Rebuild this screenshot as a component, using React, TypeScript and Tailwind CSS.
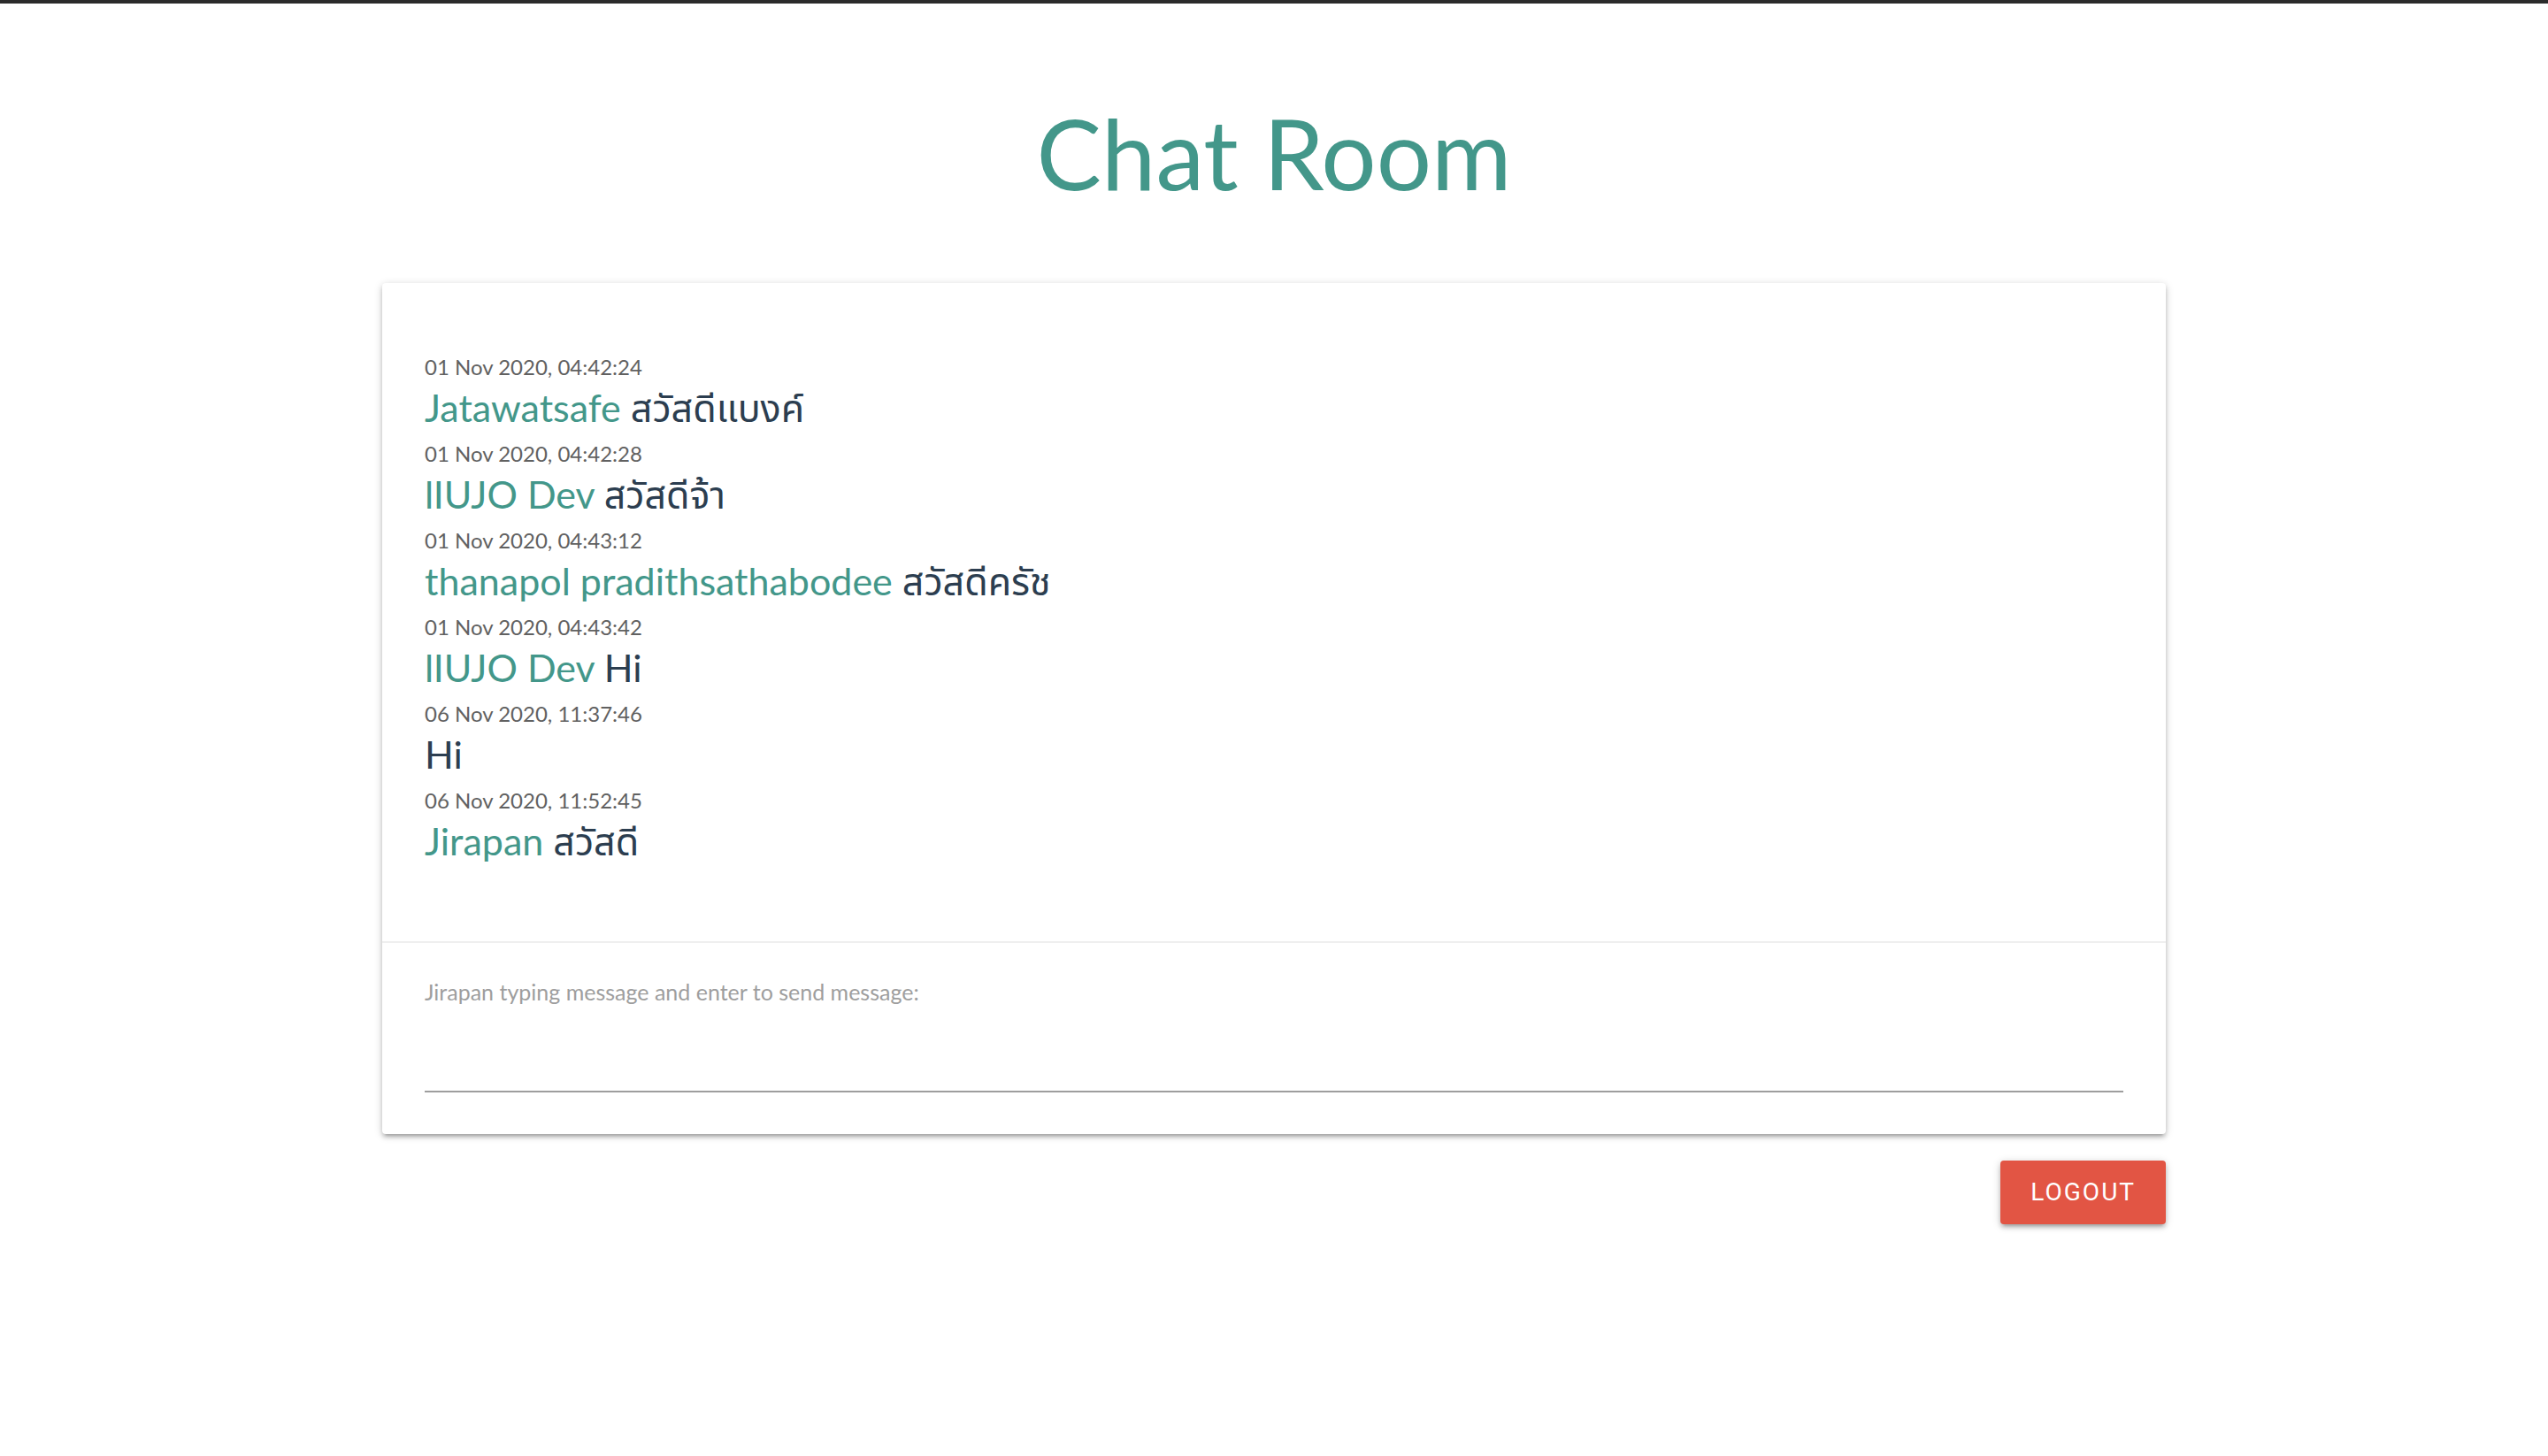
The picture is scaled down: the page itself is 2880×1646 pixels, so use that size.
import React from "react";

const messages = [
  { time: "01 Nov 2020, 04:42:24", name: "Jatawatsafe", text: "สวัสดีแบงค์" },
  { time: "01 Nov 2020, 04:42:28", name: "lIUJO Dev", text: "สวัสดีจ้า" },
  { time: "01 Nov 2020, 04:43:12", name: "thanapol pradithsathabodee", text: "สวัสดีครัช" },
  { time: "01 Nov 2020, 04:43:42", name: "lIUJO Dev", text: "Hi" },
  { time: "06 Nov 2020, 11:37:46", name: "", text: "Hi" },
  { time: "06 Nov 2020, 11:52:45", name: "Jirapan", text: "สวัสดี" },
];

export default function App() {
  return (
    <div className="min-h-[1646px] bg-white font-['Lato','Noto_Sans_Thai','Noto_Sans',sans-serif]">
      <div className="h-[4px] bg-[#2b2b2b]" />
      <h1 className="mt-[102px] text-center text-[110px] leading-[132px] font-normal text-[#43978a]">
        Chat Room
      </h1>
      <div className="mx-auto mt-[82px] w-[2016px]">
        <div className="rounded-[4px] bg-white shadow-[0_4px_4px_0_rgba(0,0,0,0.14),0_6px_2px_-4px_rgba(0,0,0,0.12),0_2px_10px_0_rgba(0,0,0,0.2)]">
          <div className="px-[48px] pt-[77px] pb-[79px]">
            {messages.map((m, i) => (
              <div key={i} className="pb-[6px]">
                <div className="text-[24px] leading-[36px] text-[#616161]">{m.time}</div>
                <div className="h-[56px] whitespace-nowrap text-[43px] leading-[56px] text-[#2c3e50]">
                  {m.name && <span className="text-[#43978a]">{m.name} </span>}
                  <span>{m.text}</span>
                </div>
              </div>
            ))}
          </div>
          <div className="border-t-[2px] border-[#efefef] px-[48px] pt-[40px] pb-[47px]">
            <label className="block text-[25px] leading-[30px] text-[#9e9e9e]">
              Jirapan typing message and enter to send message:
            </label>
            <input
              type="text"
              className="block h-[99px] w-full border-b-[2px] border-[#9e9e9e] bg-transparent text-[32px] text-[#2c3e50] outline-none"
            />
          </div>
        </div>
        <div className="mt-[30px] flex justify-end">
          <button className="h-[72px] rounded-[4px] bg-[#e25544] px-[34px] font-['Roboto',sans-serif] text-[28px] tracking-[2px] text-white uppercase shadow-[0_4px_4px_0_rgba(0,0,0,0.14),0_6px_2px_-4px_rgba(0,0,0,0.12),0_2px_10px_0_rgba(0,0,0,0.2)]">
            Logout
          </button>
        </div>
      </div>
    </div>
  );
}
